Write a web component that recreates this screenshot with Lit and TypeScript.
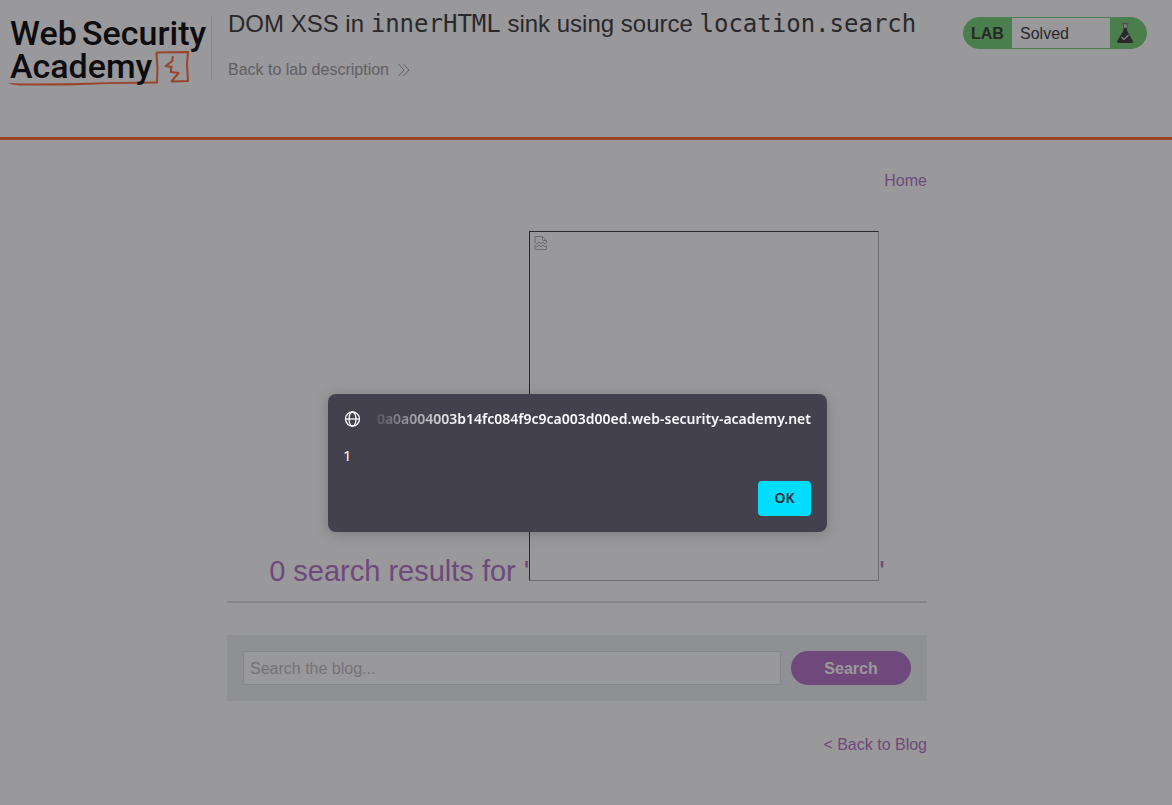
import { LitElement, html, css, svg } from "lit";
import { customElement } from "lit/decorators.js";

@customElement("lab-logo")
class LabLogo extends LitElement {
  static styles = css`
    :host { display: block; }
    svg { display: block; overflow: visible; }
    text {
      font-family: Roboto, sans-serif;
      font-size: 34px;
      font-weight: 500;
      fill: #000;
    }
    .line { fill: none; stroke: #ff6633; stroke-width: 2; stroke-linejoin: round; stroke-linecap: round; }
    .under { fill: #ff6633; }
  `;
  render() {
    return html`<svg width="203" height="76" viewBox="0 0 203 76" role="img" aria-label="Web Security Academy">
      ${svg`
        <path class="under" d="M0 67L14 67.500L60 67.300L100 66.300L149 65.500L149 67.500L100 68L60 69.500L12 69.500L4 68.500Z" />
        <path class="line" d="M149 66.500L149.500 52L148.500 37.500L149 36.500L180 36L179 48L180 65L163.500 65.500L170.500 57L162.700 56L163.500 51L157.700 50L164.300 45L164.700 41" />
        <text x="2" y="29">Web</text>
        <text x="74" y="29">Security</text>
        <text x="2" y="62">Academy</text>
      `}
    </svg>`;
  }
}

@customElement("lab-header")
class LabHeader extends LitElement {
  static styles = css`
    :host { display: block; border-bottom: 3px solid #ff6633; }
    .bar {
      display: flex;
      align-items: flex-start;
      min-height: 137px;
      padding: 0 25px 0 8px;
      box-sizing: border-box;
    }
    .logo {
      margin-top: 16px;
      height: 64px;
      border-right: 1px solid #dcdce4;
    }
    .title { flex: 1; padding: 8px 16px 0; }
    h2 { margin: 0; font-size: 24px; line-height: 32px; font-weight: 400; }
    code { font-family: "DejaVu Sans Mono", monospace; font-size: 24px; line-height: 32px; }
    .back {
      display: inline-flex;
      align-items: center;
      gap: 8px;
      margin-top: 20px;
      line-height: 20px;
      color: #999;
      text-decoration: none;
    }
    .status {
      display: flex;
      align-items: stretch;
      box-sizing: border-box;
      width: 184px;
      height: 32px;
      margin-top: 17px;
      border: 1px solid #70d070;
      border-radius: 16px;
      overflow: hidden;
      background: #70d070;
      line-height: 32px;
    }
    .lab { width: 48px; box-sizing: border-box; padding-left: 7px; font-weight: 700; }
    .state { flex: 1; padding-left: 8px; background: #fff; }
    .flask { width: 36px; box-sizing: border-box; padding-left: 5px; }
    .flask svg, .back svg { display: block; }
    .flask svg { margin-top: 4px; }
  `;
  render() {
    return html`<header class="bar">
      <div class="logo"><lab-logo></lab-logo></div>
      <div class="title">
        <h2>DOM XSS in <code>innerHTML</code> sink using source <code>location.search</code></h2>
        <a class="back" href="#">Back to lab description
          <svg width="14" height="14" viewBox="0 0 14 14" fill="none" stroke="#999" stroke-width="1" aria-hidden="true">
            <path d="M1.500 1L7 7L1.500 13M6.500 1L12 7L6.500 13" />
          </svg>
        </a>
      </div>
      <div class="status">
        <span class="lab">LAB</span>
        <span class="state">Solved</span>
        <span class="flask">
          <svg width="20" height="22" viewBox="0 0 20 22" aria-hidden="true">
            <path d="M8.500 6V8.500L2.500 18.500Q1.500 21 3.500 21H16.500Q18.500 21 17.500 18.500L12 8.500V6Z" fill="#333" />
            <path d="M8.500 2H12V6H8.500Z" fill="#ddd" stroke="#777" stroke-width="1" />
            <path d="M7 1.500H13.500" stroke="#777" stroke-width="1" />
            <path d="M6.500 15L9 17.500L13.500 13" fill="none" stroke="#ddd" stroke-width="1.200" />
          </svg>
        </span>
      </div>
    </header>`;
  }
}

@customElement("blog-results")
class BlogResults extends LitElement {
  static styles = css`
    :host { display: block; padding: 0 18px 48px 0; }
    .container { max-width: 700px; margin: 0 auto; }
    a { color: #b370c6; text-decoration: none; }
    .nav, .return { display: flex; justify-content: flex-end; line-height: 20px; }
    .nav { padding-top: 31px; }
    .return { padding-top: 34px; }
    .results {
      margin-top: 40px;
      padding-bottom: 13px;
      border-bottom: 2px solid #dcdce4;
      text-align: center;
    }
    h1 { margin: 0; font-size: 29px; line-height: 34px; font-weight: 400; color: #b370c6; white-space: nowrap; }
    .broken {
      display: inline-block;
      box-sizing: border-box;
      width: 350px;
      height: 350px;
      padding: 4px;
      border: 1px solid #b0b0b0;
      border-top-color: #333;
      border-left-color: #333;
      vertical-align: baseline;
      overflow: hidden;
      text-align: left;
    }
    .broken svg { display: block; }
    form {
      display: flex;
      gap: 10px;
      margin-top: 32px;
      padding: 16px;
      background: #ecf0f3;
    }
    input {
      flex: 1;
      min-width: 0;
      height: 34px;
      box-sizing: border-box;
      padding: 2px 6px 0;
      border: 1px solid #dfe2e6;
      background: #fff;
      font: inherit;
      color: #333;
    }
    input::placeholder { color: #bcbcbc; opacity: 1; }
    button {
      width: 120px;
      height: 34px;
      padding: 2px 0 0;
      border: 0;
      border-radius: 17px;
      background: #b370c6;
      color: #fff;
      font: inherit;
      font-weight: 700;
    }
  `;
  render() {
    return html`<main class="container">
      <nav class="nav"><a href="#">Home</a></nav>
      <section class="results">
        <h1>0 search results for '<span class="broken" role="img" aria-label="Broken image"><svg width="14" height="14" viewBox="0 0 14 14" fill="none" stroke="#b0b0b0" stroke-width="1" aria-hidden="true">
          <path d="M1 6.500V.500H8.500L12.500 4.500V7M8.500 .500V4.500H12.500M1 6.500L3 8L5 6L7 8L9 6L11 8L12.500 6.500M1 9.500V13.500H12.500V9.500M1 9.500L3 11L5 9L7 11L9 9L11 11L12.500 9.500" />
        </svg></span>'</h1>
      </section>
      <form @submit=${(e: Event) => e.preventDefault()}>
        <input type="text" aria-label="Search the blog" placeholder="Search the blog..." />
        <button type="submit">Search</button>
      </form>
      <div class="return"><a href="#">&lt; Back to Blog</a></div>
    </main>`;
  }
}

@customElement("alert-prompt")
class AlertPrompt extends LitElement {
  static styles = css`
    :host {
      position: absolute;
      inset: 0;
      display: flex;
      align-items: center;
      justify-content: center;
      padding: 121px 17px 0 0;
      background: rgba(28, 27, 34, 0.45);
      font-family: "Noto Sans", sans-serif;
      font-size: 15px;
      line-height: 20px;
      color: #fbfbfe;
    }
    .dialog {
      width: 499px;
      box-sizing: border-box;
      padding: 15px 16px 16px 15px;
      border-radius: 8px;
      background: #42414d;
      box-shadow: 0 2px 14px rgba(0, 0, 0, 0.2);
    }
    .origin { display: flex; align-items: center; gap: 4px; }
    .origin svg { flex: none; display: block; }
    .host {
      flex: 1;
      min-width: 0;
      display: flex;
      justify-content: flex-end;
      overflow: hidden;
      white-space: nowrap;
      font-size: 14px;
      font-weight: 600;
      mask-image: linear-gradient(to right, transparent, #000 96px);
    }
    .message { margin: 16px 0; }
    .actions { display: flex; justify-content: flex-end; }
    button {
      width: 53px;
      height: 35px;
      padding: 0 0 2px;
      border: 0;
      border-radius: 4px;
      background: #00ddff;
      color: #2b2a33;
      font: inherit;
      font-size: 14px;
      font-weight: 600;
    }
  `;
  render() {
    return html`<div class="dialog" role="alertdialog" aria-labelledby="host" aria-describedby="message">
      <div class="origin">
        <svg width="18" height="16" viewBox="0 0 18 16" fill="none" stroke="#fbfbfe" stroke-width="1.300" aria-hidden="true">
          <circle cx="9.500" cy="8" r="7" />
          <ellipse cx="9.500" cy="8" rx="3.500" ry="7" />
          <path d="M2.500 8H16.500" />
        </svg>
        <div class="host" id="host">0a0a004003b14fc084f9c9ca003d00ed.web-security-academy.net</div>
      </div>
      <p class="message" id="message">1</p>
      <div class="actions"><button type="button">OK</button></div>
    </div>`;
  }
}

@customElement("app-root")
class AppRoot extends LitElement {
  static styles = css`
    :host {
      display: block;
      position: relative;
      min-height: 100vh;
      background: #fff;
      color: #333;
      font-family: "Liberation Sans", Arial, sans-serif;
      font-size: 16px;
    }
  `;
  render() {
    return html`
      <lab-header></lab-header>
      <blog-results></blog-results>
      <alert-prompt></alert-prompt>
    `;
  }
}
